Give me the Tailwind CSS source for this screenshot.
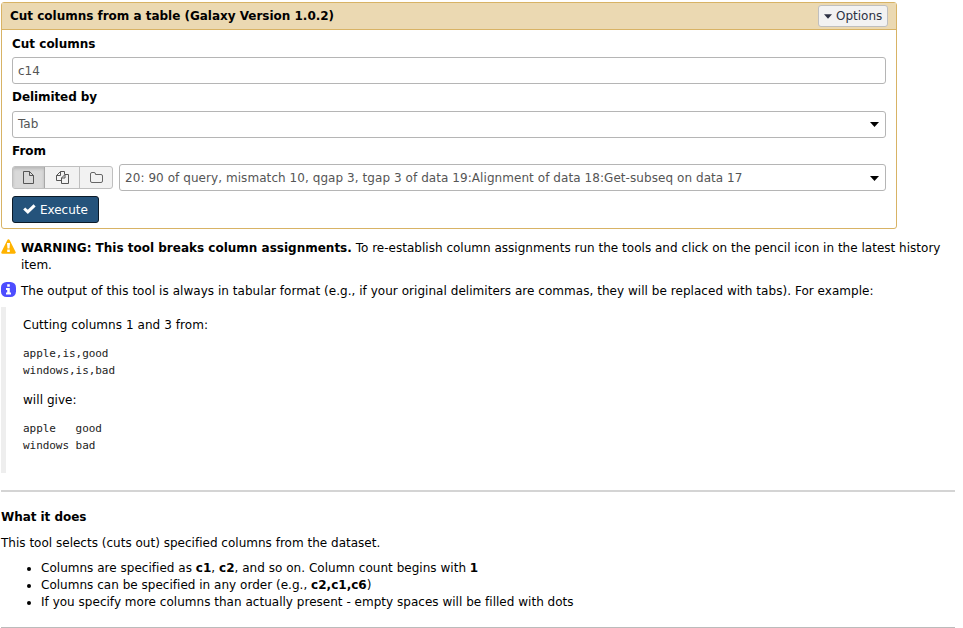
<!DOCTYPE html>
<html lang="en">
<head>
<meta charset="utf-8">
<title>Cut columns</title>
<script src="https://cdn.jsdelivr.net/npm/@tailwindcss/browser@4"></script>
</head>
<body class="bg-white w-[963px] h-[628px] overflow-hidden text-black text-[12px] leading-[17px] font-['DejaVu_Sans',Verdana,sans-serif] whitespace-nowrap">
<main class="pl-px pt-[2px]">
  <section class="w-[896px] h-[227px] border border-[#d8b365] rounded-[3px]">
    <header class="h-[27px] bg-[#ebd9b2] border-b border-[#d8b365] flex items-center justify-between pl-[8px] pr-[8px]">
      <h1 class="font-bold tracking-[-0.015px]"><span>Cut columns from a table (Galaxy Version 1.0.2)</span></h1>
      <button class="h-[22px] w-[70px] border border-[#bfbfbf] rounded-[3px] bg-[#f2f2f2] text-[#2c3143] flex items-center gap-[4px] pl-[5px]">
        <svg class="w-[8px] h-[5px]" viewBox="0 0 9 5"><path d="M0 0h9L4.500 5z" fill="#2c3143"/></svg><span>Options</span>
      </button>
    </header>
    <div class="px-[10px]">
      <div class="h-[27px] pt-[2px] flex items-center font-bold"><span>Cut columns</span></div>
      <div class="h-[27px] border border-[#b5b5b5] rounded-[3px] flex items-center pl-[5px] pt-px text-[#555]"><span>c14</span></div>
      <div class="h-[27px] flex items-center font-bold tracking-[-0.08px]"><span>Delimited by</span></div>
      <div class="h-[27px] border border-[#b5b5b5] rounded-[3px] flex items-center justify-between pl-[5px] pr-[6px] text-[#555]"><span>Tab</span><svg class="w-[9px] h-[5px]" viewBox="0 0 9 5"><path d="M0 0h9L4.500 5z"/></svg></div>
      <div class="h-[26px] pt-px flex items-center font-bold"><span>From</span></div>
      <div class="flex items-center gap-[6px]">
        <div class="w-[101px] h-[23px] border border-[#bfbfbf] rounded-[3px] bg-[#f2f2f2] flex overflow-hidden">
          <div class="w-[32px] bg-[#d9d9d9] shadow-[inset_0_2px_3px_rgba(0,0,0,0.15)] border-r border-[#a8a8a8] flex items-center justify-center"><svg class="w-[11px] h-[13px]" viewBox="0 0 11 13" fill="none" stroke="#555"><path d="M.5.5h6l4 4v8H.5zM6.500.5v4h4"/></svg></div>
          <div class="w-[35px] border-r border-[#bfbfbf] flex items-center justify-center"><svg class="w-[13px] h-[13px]" viewBox="0 0 13 13" fill="none" stroke="#555"><path d="M5.500 9.500h-5v-5l4-4h4v3M4.500.5v4h-4M5.500 7l3.500-3.500h3.500v9h-7zM9 3.500V7H5.500"/></svg></div>
          <div class="flex-1 flex items-center justify-center"><svg class="w-[13px] h-[11px]" viewBox="0 0 13 11" fill="none" stroke="#666"><path d="M.5 9v-7q0-1.500 1.500-1.500h2q1.500 0 1.500 1.500v.5h5.500q1.500 0 1.500 1.500v5q0 1.500-1.500 1.500H2q-1.500 0-1.500-1.500z"/></svg></div>
        </div>
        <div class="flex-1 h-[27px] border border-[#b5b5b5] rounded-[3px] flex items-center justify-between pl-[5px] pr-[6px] pt-px text-[#555]"><span class="tracking-[0.065px]">20: 90 of query, mismatch 10, qgap 3, tgap 3 of data 19:Alignment of data 18:Get-subseq on data 17</span><svg class="w-[9px] h-[5px]" viewBox="0 0 9 5"><path d="M0 0h9L4.500 5z"/></svg></div>
      </div>
      <button class="mt-[5px] w-[87px] h-[27px] bg-[#25537b] border border-[#0c1a28] rounded-[3px] text-white flex items-center gap-[4px] pl-[10px] pt-px">
        <svg class="w-[13px] h-[10px] -mt-[2px]" viewBox="0 0 13 10"><path d="M1.200 4.500l3.600 3.400L11.600 1.300" fill="none" stroke="#fff" stroke-width="3"/></svg><span class="tracking-[-0.03px]">Execute</span>
      </button>
    </div>
  </section>

  <section class="pt-[11px] flex gap-[5px]">
    <svg class="w-[15px] h-[15px] -mt-px" viewBox="0 0 15 15"><path d="M7.500 1.500L13.500 13.500h-12z" fill="#ffb300" stroke="#ffb300" stroke-width="2.500" stroke-linejoin="round"/><path d="M6 4h3l-.5 5.500h-2zM6.200 10.500h2.600v2.500H6.200z" fill="#fff"/></svg>
    <p><b><span>WARNING: This tool breaks column assignments.</span></b> <span class="tracking-[0.015px]">To re-establish column assignments run the tools and click on the pencil icon in the latest history</span><br>item.</p>
  </section>
  <section class="pt-[9px] flex gap-[5px]">
    <svg class="w-[15px] h-[15px] -mt-px" viewBox="0 0 15 15"><rect width="15" height="15" rx="5.500" fill="#4d4dff"/><path d="M6.200 2.300h2.600v2.400H6.200zM5 6h3.800v4.500H10v2H5v-2h1.200V8H5z" fill="#fff"/></svg>
    <p><span class="tracking-[0.04px]">The output of this tool is always in tabular format (e.g., if your original delimiters are commas, they will be replaced with tabs). For example:</span></p>
  </section>
  <blockquote class="mt-[7px] h-[166px] border-l-[5px] border-[#eee] pl-[17px] pt-[10px]">
    <p><span class="tracking-[0.06px]">Cutting columns 1 and 3 from:</span></p>
    <pre class="mt-[11px] text-[11px] leading-[17px] tracking-[-0.05px] text-[#222] font-['DejaVu_Sans_Mono',monospace]">apple,is,good
windows,is,bad</pre>
    <p class="mt-[13px] tracking-[0.05px]"><span>will give:</span></p>
    <pre class="mt-[11px] text-[11px] leading-[17px] tracking-[-0.05px] text-[#222] font-['DejaVu_Sans_Mono',monospace]">apple   good
windows bad</pre>
  </blockquote>
  <hr class="mt-[17px] w-[954px] border-t-2 border-[#d4d4d4]">
  <h2 class="mt-[17px] font-bold tracking-[-0.05px]"><span>What it does</span></h2>
  <p class="mt-[9px]"><span class="tracking-[0.01px]">This tool selects (cuts out) specified columns from the dataset.</span></p>
  <ul class="mt-[8px] pl-[40px] list-disc">
    <li><span class="tracking-[0.025px]">Columns are specified as <b>c1</b>, <b>c2</b>, and so on. Column count begins with <b>1</b></span></li>
    <li><span class="tracking-[0.02px]">Columns can be specified in any order (e.g., <b>c2,c1,c6</b>)</span></li>
    <li><span class="tracking-[0.02px]">If you specify more columns than actually present - empty spaces will be filled with dots</span></li>
  </ul>
  <hr class="mt-[16px] w-[954px] border-t border-[#bbb]">
</main>
</body>
</html>
